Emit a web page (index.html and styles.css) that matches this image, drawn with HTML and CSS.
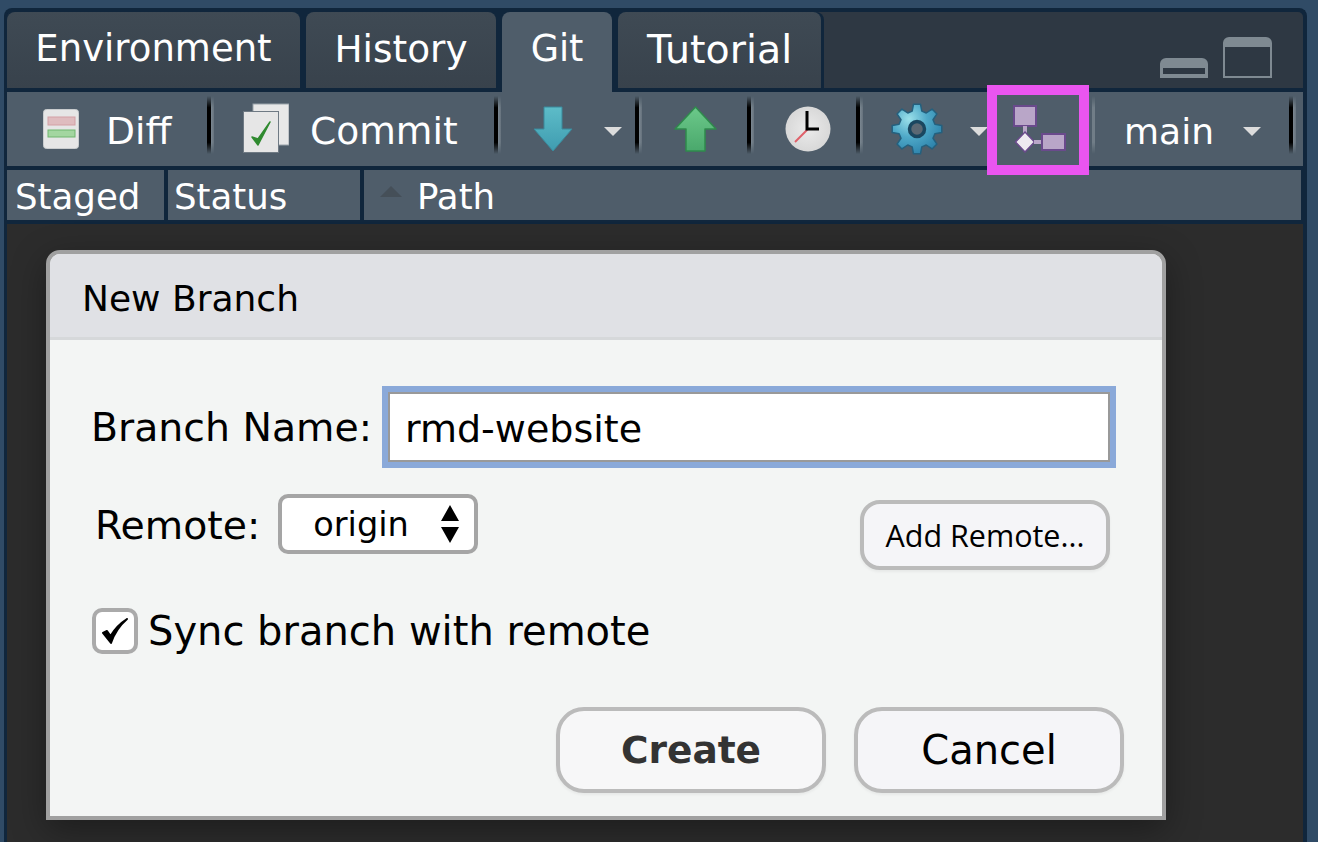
FILE: index.html
```html
<!DOCTYPE html>
<html lang="en">
<head>
    <meta charset="UTF-8">
    <title>New Branch</title>
    <link rel="stylesheet" href="styles.css">
</head>
<body>
    <div class="pane">
        <div class="tab-strip">
            <div class="tabs">
                <div class="tab tab-env">Environment</div>
                <div class="tab tab-history">History</div>
                <div class="tab tab-git active">Git</div>
                <div class="tab tab-tutorial">Tutorial</div>
            </div>
            <div class="window-buttons">
                <div class="win-min"></div>
                <div class="win-max"></div>
            </div>
        </div>

        <div class="toolbar">
            <div class="tool tool-diff">
                <svg width="36" height="40" viewBox="0 0 36 40">
                    <rect x="0.5" y="0.5" width="35" height="39" rx="3" fill="#e6e6e6" stroke="#c9ccce"/>
                    <rect x="5" y="8" width="27" height="8" fill="#dfbcbf" stroke="#d3a0a5"/>
                    <rect x="5" y="21" width="27" height="7" fill="#a3d6a0" stroke="#6fb56e"/>
                </svg>
                <span>Diff</span>
            </div>
            <div class="sep"></div>
            <div class="tool tool-commit">
                <svg width="46" height="50" viewBox="0 0 46 50">
                    <rect x="10" y="1" width="36" height="41" fill="#e8e8e8" stroke="#9aa3aa"/>
                    <rect x="0.5" y="8.5" width="35" height="41" fill="#e6e6e6" stroke="#6f7a84"/>
                    <path d="M9 34 L15 42 L27 19 L15 36 Z" fill="#2f8a2f" stroke="#2f8a2f" stroke-width="1.5" stroke-linejoin="round"/>
                </svg>
                <span>Commit</span>
            </div>
            <div class="sep"></div>
            <div class="tool tool-pull">
                <svg width="40" height="46" viewBox="0 0 40 46">
                    <defs>
                        <linearGradient id="pull-fill" x1="0" y1="0" x2="0" y2="1">
                            <stop offset="0" stop-color="#5dbcc8"/>
                            <stop offset="1" stop-color="#3f9cb0"/>
                        </linearGradient>
                    </defs>
                    <path d="M11 1 H29 V23 H39 L20 45 L1 23 H11 Z" fill="url(#pull-fill)" stroke="#3a8a9c" stroke-linejoin="round"/>
                </svg>
                <div class="caret"></div>
            </div>
            <div class="sep"></div>
            <div class="tool tool-push">
                <svg width="43" height="46" viewBox="0 0 43 46">
                    <defs>
                        <linearGradient id="push-fill" x1="0" y1="0" x2="0" y2="1">
                            <stop offset="0" stop-color="#6cc98a"/>
                            <stop offset="1" stop-color="#4aa86c"/>
                        </linearGradient>
                    </defs>
                    <path d="M21.5 1 L42 23 H31 V45 H12 V23 H1 Z" fill="url(#push-fill)" stroke="#2f8a4c" stroke-width="1.5" stroke-linejoin="round"/>
                </svg>
            </div>
            <div class="sep"></div>
            <div class="tool tool-clock">
                <svg width="46" height="46" viewBox="0 0 46 46">
                    <defs>
                        <radialGradient id="clock-fill" cx="0.5" cy="0.5" r="0.5">
                            <stop offset="0" stop-color="#ebebeb"/>
                            <stop offset="1" stop-color="#d8d8d8"/>
                        </radialGradient>
                    </defs>
                    <circle cx="23" cy="23" r="22.5" fill="url(#clock-fill)"/>
                    <path d="M23 23 L10 36" stroke="#e0606a" stroke-width="2"/>
                    <path d="M22 5 V23 H34" fill="none" stroke="#000" stroke-width="3"/>
                </svg>
            </div>
            <div class="sep"></div>
            <div class="tool tool-gear">
                <svg width="52" height="52" viewBox="0 0 52 52">
                    <defs>
                        <radialGradient id="gear-fill" gradientUnits="userSpaceOnUse" cx="18" cy="16" r="36">
                            <stop offset="0" stop-color="#9be0ea"/>
                            <stop offset="0.5" stop-color="#4fa9c8"/>
                            <stop offset="1" stop-color="#2f85ad"/>
                        </radialGradient>
                    </defs>
                    <path fill="url(#gear-fill)" stroke="#24607e" stroke-width="1.5" stroke-linejoin="round" d="M21.2 8.1 L22.5 1.2 H29.500 L30.8 8.1 L35.25 10 L41.05 6.03 L45.97 10.95 L42 16.75 L43.9 21.2 L50.8 22.5 V29.500 L43.9 30.8 L42 35.25 L45.97 41.05 L41.05 45.97 L35.25 42 L30.8 43.9 L29.500 50.8 H22.5 L21.2 43.9 L16.75 42 L10.95 45.97 L6.03 41.05 L10 35.25 L8.1 30.8 L1.2 29.500 V22.5 L8.1 21.2 L10 16.75 L6.03 10.95 L10.95 6.03 L16.75 10 Z"/>
                    <circle cx="26" cy="26" r="7.500" fill="#5b6873" stroke="#1a4760" stroke-width="3.500"/>
                </svg>
                <div class="caret"></div>
            </div>
            <div class="tool tool-branch">
                <svg width="54" height="48" viewBox="0 0 54 48">
                    <rect x="1" y="1" width="22" height="20" fill="#b9a6c8" stroke="#6a4a8c" stroke-width="2"/>
                    <rect x="10" y="21" width="4" height="7" fill="#b9a6c8"/>
                    <path d="M12 27 L21.5 37 L12 47 L2.5 37 Z" fill="#eeeaf0" stroke="#6a4a8c" stroke-width="1.5"/>
                    <rect x="21" y="35" width="7" height="4" fill="#b9a6c8"/>
                    <rect x="29" y="29" width="23" height="16" fill="#b9a6c8" stroke="#6a4a8c" stroke-width="2"/>
                </svg>
            </div>
            <div class="sep sep-faint"></div>
            <div class="tool tool-main">
                <span>main</span>
                <div class="caret"></div>
            </div>
            <div class="sep"></div>
            <div class="highlight"></div>
        </div>

        <div class="columns">
            <div class="col col-staged">Staged</div>
            <div class="col col-status">Status</div>
            <div class="col col-path"><div class="sort-arrow"></div>Path</div>
        </div>

        <div class="file-list">
            <div class="dialog">
                <div class="dialog-title">New Branch</div>
                <div class="dialog-body">
                    <div class="row row-name">
                        <label class="field-label">Branch Name:</label>
                        <div class="name-focus"><input class="name-input" type="text" value="rmd-website"></div>
                    </div>
                    <div class="row row-remote">
                        <label class="field-label">Remote:</label>
                        <div class="select">
                            <span>origin</span>
                            <svg width="18" height="38" viewBox="0 0 18 38">
                                <path d="M9 0 L18 16 H0 Z M9 38 L0 22 H18 Z" fill="#000"/>
                            </svg>
                        </div>
                        <button class="btn-add">Add Remote...</button>
                    </div>
                    <div class="row row-sync">
                        <div class="checkbox">
                            <svg width="30" height="30" viewBox="0 0 30 30">
                                <path d="M3 17 L11 27 C14 18 20 9 27 3 C19 8 14 14 10.500 20 L7 15 Z" fill="#000" stroke="#000" stroke-width="2" stroke-linejoin="round"/>
                            </svg>
                        </div>
                        <span>Sync branch with remote</span>
                    </div>
                    <div class="dialog-buttons">
                        <button class="btn btn-default">Create</button>
                        <button class="btn">Cancel</button>
                    </div>
                </div>
            </div>
        </div>
    </div>
</body>
</html>
```

FILE: styles.css
```css
html, body {
    height: 100%;
}
body {
    margin: 0;
    overflow: hidden;
    background-color: #304b66;
    color: #fff;
    font-family: "DejaVu Sans", sans-serif;
}
.pane {
    box-sizing: border-box;
    width: 1303px;
    height: 834px;
    margin: 8px 0 0 4px;
    border: 4px solid #10263c;
    border-left-width: 3px;
    border-bottom: none;
    border-radius: 8px 8px 0 0;
    background-color: #10263c;
    display: flex;
    flex-direction: column;
    gap: 4px;
}

/* tabs */
.tab-strip {
    height: 76px;
    flex: none;
    display: flex;
    background-color: #2e3843;
    border-radius: 5px 5px 0 0;
}
.tabs {
    display: flex;
    gap: 6px;
    padding-right: 3px;
    background-color: #10263c;
    border-radius: 5px 8px 0 0;
}
.tab {
    box-sizing: border-box;
    height: 76px;
    padding-top: 14px;
    text-align: center;
    line-height: 46px;
    border-radius: 8px 8px 0 0;
    background: linear-gradient(#3f4a54, #38424c);
}
.tab-env { width: 293px; font-size: 37px; }
.tab-history { width: 190px; font-size: 37.4px; }
.tab-git { width: 110px; font-size: 36.5px; }
.tab-tutorial { width: 203px; font-size: 39.5px; }
.tab.active {
    height: 80px;
    background: #4f5d6a;
    position: relative;
    z-index: 1;
}
.window-buttons {
    margin-left: auto;
    padding: 25px 31px 10px 0;
    display: flex;
    align-items: flex-end;
    gap: 15px;
}
.win-min {
    box-sizing: border-box;
    width: 48px;
    height: 20px;
    border-radius: 6px 6px 0 0;
    border-top: 10px solid #7f8a92;
    border-bottom: 4px solid #7f8a92;
    border-left: 3px solid #7f8a92;
    border-right: 3px solid #7f8a92;
    background-color: #2e3843;
}
.win-max {
    box-sizing: border-box;
    width: 49px;
    height: 41px;
    background-color: #2e3843;
    border: 2px solid #7f8a92;
    border-top-width: 10px;
    border-radius: 6px 6px 0 0;
}

/* toolbar */
.toolbar {
    position: relative;
    height: 74px;
    flex: none;
    display: flex;
    background-color: #4f5d6a;
}
.tool {
    box-sizing: border-box;
    display: flex;
    align-items: center;
    height: 74px;
    font-size: 37.6px;
}
.tool svg {
    flex: none;
    filter: blur(0.4px);
}
.tool span {
    position: relative;
    top: 2px;
}
.tool-diff { width: 200px; padding-left: 36px; gap: 27px; }
.tool-commit { width: 280px; padding-left: 29px; gap: 21px; }
.tool-commit svg { margin-top: -3px; }
.tool-pull { width: 134px; padding-left: 32px; gap: 31px; }
.tool-push { width: 105px; padding-left: 32px; }
.tool-clock { width: 102px; padding-left: 31px; }
.tool-gear { width: 127px; padding-left: 28px; gap: 27px; }
.tool-branch { width: 100px; padding-left: 23px; }
.tool-main { width: 193px; padding-left: 28px; gap: 29px; font-size: 36px; }
.caret {
    width: 0;
    height: 0;
    margin-top: 5px;
    border-left: 9px solid transparent;
    border-right: 9px solid transparent;
    border-top: 9px solid #dcdcdc;
}
.sep {
    width: 7px;
    height: 58px;
    margin-top: 4px;
    flex: none;
    background: linear-gradient(to right, #000 0, #000 4px, #7b8791 4px, #66727d 7px);
    -webkit-mask-image: linear-gradient(transparent, #000 20%, #000 80%, transparent);
    mask-image: linear-gradient(transparent, #000 20%, #000 80%, transparent);
}
.sep-faint {
    width: 6px;
    background: linear-gradient(to right, #4f5d6a 0, #4f5d6a 2px, #717d87 2px, #717d87 5px, #4f5d6a 5px);
}
.highlight {
    position: absolute;
    left: 980px;
    top: -7px;
    box-sizing: border-box;
    width: 102px;
    height: 90px;
    border: 10px solid #ea55f0;
}

/* column headers */
.columns {
    height: 50px;
    flex: none;
    margin-right: 2px;
    display: flex;
    gap: 4px;
    font-size: 35.6px;
    line-height: 54px;
}
.col {
    box-sizing: border-box;
    background-color: #4f5d6a;
}
.col-staged { width: 157px; padding-left: 8px; }
.col-status { width: 192px; padding-left: 6px; }
.col-path {
    flex: 1;
    padding-left: 16px;
    display: flex;
    gap: 15px;
}
.sort-arrow {
    width: 0;
    height: 0;
    margin-top: 16px;
    border-left: 11px solid transparent;
    border-right: 11px solid transparent;
    border-bottom: 11px solid #454f58;
}

/* dialog */
.file-list {
    flex: 1;
    padding: 26px 0 0 39px;
    background-color: #2c2c2c;
}
.dialog {
    box-sizing: border-box;
    width: 1120px;
    height: 570px;
    border: 4px solid #a0a0a0;
    border-radius: 14px 14px 0 0;
    background-color: #f3f5f4;
    box-shadow: 0 10px 34px rgba(0, 0, 0, 0.35);
    color: #000;
    display: flex;
    flex-direction: column;
}
.dialog-title {
    box-sizing: border-box;
    height: 86px;
    flex: none;
    padding-left: 32px;
    font-size: 36px;
    line-height: 90px;
    background-color: #e0e1e5;
    border-bottom: 3px solid #d6d8da;
    border-radius: 10px 10px 0 0;
}
.dialog-body {
    flex: 1;
    padding: 46px 46px 0 41px;
    display: flex;
    flex-direction: column;
}
.row {
    display: flex;
    align-items: flex-start;
    font-size: 39.4px;
}
.row-name {
    justify-content: space-between;
    align-items: center;
}
.name-focus {
    width: 734px;
    height: 82px;
    box-sizing: border-box;
    border: 6px solid #8aa9d9;
}
.name-input {
    box-sizing: border-box;
    display: block;
    width: 100%;
    height: 100%;
    margin: 0;
    padding: 3px 15px 0;
    border: 2px solid #999;
    background-color: #fff;
    outline: none;
    font-family: "DejaVu Sans", sans-serif;
    font-size: 38px;
    color: #000;
}
.row-remote {
    margin-top: 26px;
    padding-left: 4px;
}
.row-remote .field-label {
    line-height: 62px;
    margin-right: 18px;
}
.select {
    box-sizing: border-box;
    width: 200px;
    height: 60px;
    padding: 0 15px 0 31px;
    display: flex;
    align-items: center;
    justify-content: space-between;
    border: 4px solid #a5a5a5;
    border-radius: 10px;
    background-color: #fff;
    font-size: 33.6px;
}
.btn-add {
    box-sizing: border-box;
    width: 250px;
    height: 70px;
    margin: 6px 6px 0 auto;
    padding: 0;
    border: 4px solid #bbb;
    border-radius: 20px;
    background-color: #f5f5f8;
    box-shadow: 0 2px 3px rgba(0, 0, 0, 0.05);
    font-family: "Open Sans", sans-serif;
    font-size: 30.5px;
    color: #000;
}
.row-sync {
    margin-top: 38px;
    padding-left: 1px;
    align-items: center;
    gap: 10px;
    font-size: 40px;
}
.checkbox {
    box-sizing: border-box;
    width: 46px;
    height: 46px;
    display: flex;
    align-items: center;
    justify-content: center;
    border: 4px solid #aaa;
    border-radius: 10px;
    background-color: #fff;
}
.dialog-buttons {
    margin-top: 53px;
    margin-right: -8px;
    display: flex;
    justify-content: flex-end;
    gap: 28px;
}
.btn {
    box-sizing: border-box;
    width: 270px;
    height: 86px;
    padding: 0;
    border: 4px solid #bbb;
    border-radius: 28px;
    background-color: #f5f5f8;
    box-shadow: 0 2px 3px rgba(0, 0, 0, 0.05);
    font-family: "DejaVu Sans", sans-serif;
    font-size: 40px;
    color: #000;
}
.btn-default {
    background-color: #f7f7f8;
    color: #333;
    font-size: 37.5px;
    font-weight: bold;
}
```
